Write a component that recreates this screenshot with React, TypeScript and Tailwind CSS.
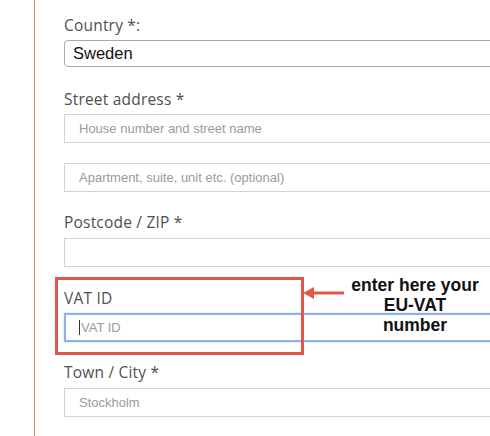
import React from 'react';

const labelCls = "block text-[15.5px] leading-[20px] text-[#4f4f4f] mb-[5px] tracking-[0.2px]";
const inputCls = "h-[29px] w-[470px] border border-[#d4d4d4] bg-white pl-[14px] flex items-center text-[13px] text-[#9a9a9a]";
const labelFont = { fontFamily: '"Open Sans", sans-serif' };

export default function App() {
    return (
        <div className="relative h-[436px] w-[490px] overflow-hidden bg-white" style={{ fontFamily: '"Liberation Sans", Arial, sans-serif' }}>
            <div className="ml-[34px] h-full border-l border-[#e3825b] pl-[29px] pt-[15px]">
                <div>
                    <span className={labelCls} style={labelFont}>Country *:</span>
                    <div className="h-[27px] w-[470px] rounded-[4px] border border-[#a9a9a9] bg-white pl-[8px] flex items-center text-[16.5px] text-[#111]">
                        Sweden
                    </div>
                </div>

                <div className="mt-[22px]">
                    <span className={labelCls} style={labelFont}>Street address *</span>
                    <div className={inputCls}>House number and street name</div>
                    <div className={inputCls + " mt-[20px]"}>Apartment, suite, unit etc. (optional)</div>
                </div>

                <div className="mt-[20px]">
                    <span className={labelCls + " mb-[6px]"} style={labelFont}>Postcode / ZIP *</span>
                    <div className={inputCls} />
                </div>

                <div className="mt-[21px]">
                    <span className={labelCls} style={labelFont}>VAT ID</span>
                    <div className="h-[29px] w-[470px] border-2 border-[#8eb1e3] bg-white pl-[13px] flex items-center text-[13px] text-[#9a9a9a] shadow-[0_0_2px_#b9cff0]">
                        <span className="mr-[1px] inline-block h-[15px] w-px bg-[#333]" />
                        VAT ID
                    </div>
                </div>

                <div className="mt-[20px]">
                    <span className={labelCls + " mb-[6px]"} style={labelFont}>Town / City *</span>
                    <div className={inputCls}>Stockholm</div>
                </div>
            </div>

            {/* annotation */}
            <div className="absolute left-[55px] top-[277px] h-[78px] w-[249px] border-[3px] border-[#e2574c]" />
            <svg className="absolute left-[302px] top-[285px]" width="44" height="16" viewBox="0 0 44 16">
                <line x1="10" y1="8" x2="42" y2="8" stroke="#e2574c" strokeWidth="3" />
                <polygon points="1,8 12,2 12,14" fill="#e2574c" />
            </svg>
            <div className="absolute left-[335px] top-[275px] w-[160px] text-center text-[17.5px] font-bold leading-[20px] text-[#111]">
                enter here your<br />EU-VAT<br />number
            </div>
        </div>
    );
}
